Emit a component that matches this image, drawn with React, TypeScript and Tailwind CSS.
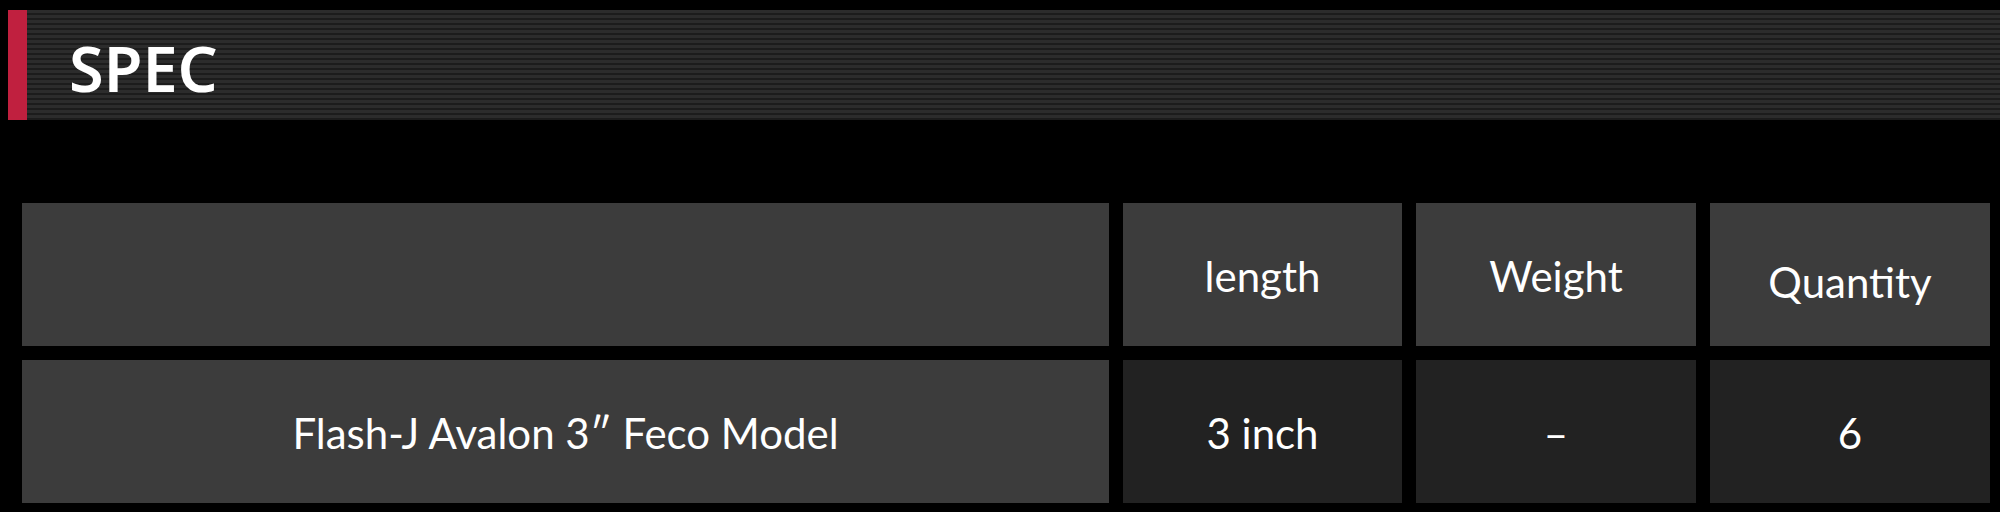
const headers = ['length', 'Weight', 'Quantity'];

const row = {
  name: 'Flash-J Avalon 3″ Feco Model',
  values: ['3 inch', '–', '6'],
};

export default function App() {
  return (
    <div className="h-[512px] w-full overflow-hidden bg-black pt-[10px] font-['Lato',sans-serif] text-white">
      {/* section title */}
      <div className="ml-[8px] flex h-[110px] items-stretch bg-[repeating-linear-gradient(180deg,#2c2c2c_0px,#2c2c2c_3px,#1c1c1c_3px,#1c1c1c_5px)]">
        <div className="w-[19px] bg-[#c0203f]" />
        <h2 className="flex items-center pl-[42px] pt-[4px] font-['Noto_Sans',sans-serif] text-[63px] font-semibold leading-none text-white">
          SPEC
        </h2>
      </div>

      <div className="mt-[83px] pl-[22px] pr-[10px]">
        <div className="grid grid-cols-[1fr_279px_280px_280px] grid-rows-[143px_143px] gap-[14px] text-[42px] leading-none">
          <div className="bg-[#3c3c3c]" />
          {headers.map((h) => (
            <div
              key={h}
              className={`flex items-center justify-center bg-[#3c3c3c] ${h === 'Quantity' ? 'pt-[14px]' : 'pt-[2px]'}`}
            >
              {h}
            </div>
          ))}

          <div className="flex items-center justify-center bg-[#3c3c3c] pt-[2px]">
            {row.name}
          </div>
          {row.values.map((v, i) => (
            <div key={i} className="flex items-center justify-center bg-[#222222] pt-[2px]">
              {v}
            </div>
          ))}
        </div>
      </div>
    </div>
  );
}
